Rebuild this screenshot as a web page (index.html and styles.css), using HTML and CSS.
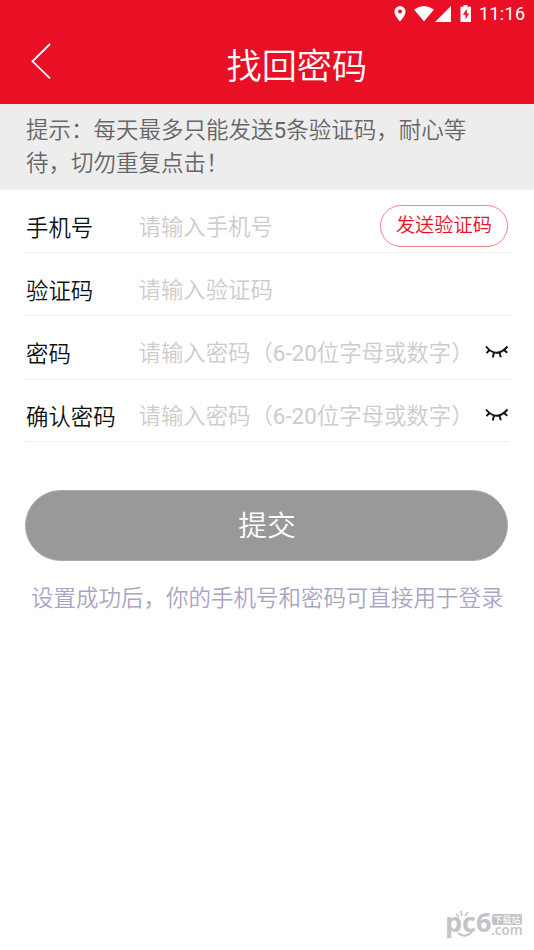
FILE: index.html
```html
<!DOCTYPE html>
<html lang="zh-CN">
<head>
<meta charset="utf-8">
<title>找回密码</title>
<link rel="stylesheet" href="styles.css">
</head>
<body>
<header class="top">
  <div class="status">
    <svg class="pin" width="12" height="16" viewBox="0 0 12 16"><path fill="#fff" fill-rule="evenodd" d="M6 0a5.6 5.6 0 0 0-5.6 5.6C.4 9.8 6 15.600 6 15.600s5.600-5.800 5.600-10A5.600 5.600 0 0 0 6 0zm0 3.600a2 2 0 1 1 0 4 2 2 0 0 1 0-4z"/></svg>
    <svg class="wifi" width="20" height="16" viewBox="0 0 20 16"><path fill="#fff" d="M0 3.500Q10-3.500 20 3.500L10 15.500z"/></svg>
    <svg class="signal" width="16" height="16" viewBox="0 0 16 16"><path fill="#fff" d="M16 0v16H0z"/></svg>
    <svg class="battery" width="12" height="17" viewBox="0 0 12 17"><path fill="#fff" fill-rule="evenodd" d="M3.500 0h4v1.700H11V17H.5V1.700h3zM6.800 4L2.800 9.800h2.700v4.500l3.700-5.800H6.800z"/></svg>
    <span class="clock">11:16</span>
  </div>
  <div class="nav">
    <svg class="back" width="20" height="36" viewBox="0 0 20 36"><path d="M19 1L1.500 18.300 19 35.300" fill="none" stroke="#fff" stroke-width="1.800"/></svg>
    <h1 class="title">找回密码</h1>
  </div>
</header>
<p class="tip">提示：每天最多只能发送<span class="num">5</span>条验证码，耐心等<br>待，切勿重复点击！</p>
<main class="form">
  <div class="row row-phone"><label class="label">手机号</label><span class="field">请输入手机号</span><button class="send">发送验证码</button></div>
  <div class="row row-code"><label class="label">验证码</label><span class="field">请输入验证码</span></div>
  <div class="row row-pass"><label class="label">密码</label><span class="field">请输入密码（<span class="num">6-20</span>位字母或数字）</span>
    <svg class="eye" width="24" height="14" viewBox="0 0 24 14"><path d="M1 1.500Q11.500 14 22.500 1.500M4.500 5L1.500 8.200M9 7.500L7.800 12.500M14.500 7.500L15.800 12.200M19 5L22.300 7.700" fill="none" stroke="#111" stroke-width="1.900"/></svg></div>
  <div class="row row-confirm"><label class="label">确认密码</label><span class="field">请输入密码（<span class="num">6-20</span>位字母或数字）</span>
    <svg class="eye" width="24" height="14" viewBox="0 0 24 14"><path d="M1 1.500Q11.500 14 22.500 1.500M4.500 5L1.500 8.200M9 7.500L7.800 12.500M14.500 7.500L15.800 12.200M19 5L22.300 7.700" fill="none" stroke="#111" stroke-width="1.900"/></svg></div>
  <button class="submit">提交</button>
  <p class="note">设置成功后，你的手机号和密码可直接用于登录</p>
</main>
<footer class="mark">
  <span class="mark-name">pc6</span>
  <span class="mark-side"><span class="mark-tag">下载站</span><span class="mark-com">.com</span></span>
  <svg class="mark-rays" width="14" height="7" viewBox="0 0 14 7"><path d="M1 3l3 3M6 0l1 5M13 1l-3 4" stroke="#c3c4c8" stroke-width="1.600"/></svg>
  <svg class="mark-smile" width="16" height="5" viewBox="0 0 16 5"><path d="M1 1Q8 7 15 0" fill="none" stroke="#c3c4c8" stroke-width="2"/></svg>
</footer>
</body>
</html>
```

FILE: styles.css
```css
* { box-sizing: border-box; }
body {
  margin: 0;
  height: 950px;
  display: flex;
  flex-direction: column;
  background: #fff;
  overflow: hidden;
  font-family: Roboto, "Noto Sans CJK SC DemiLight", "Noto Sans CJK SC", sans-serif;
  font-size: 22.400px;
  font-weight: 350;
}
button { font-family: inherit; font-weight: inherit; padding: 0; }
.num { font-weight: 400; }
.top { height: 103.500px; background: #e91026; color: #fff; flex: none; }
.status { height: 27px; display: flex; justify-content: flex-end; align-items: center; padding-right: 9px; }
.wifi { margin-left: 8px; }
.signal { margin-left: 1px; }
.battery { margin-left: 9px; }
.clock { margin-left: 7px; width: 46px; font-size: 18px; font-weight: 400; line-height: 27px; letter-spacing: .3px; white-space: nowrap; }
.nav { height: 76px; display: flex; align-items: center; padding-left: 31px; }
.back { flex: none; margin-bottom: 8px; }
.title { margin: 0 0 0 175.500px; padding-top: 3px; font-size: 35.200px; font-weight: 350; line-height: 76px; }
.tip { margin: 0; flex: none; height: 86.500px; padding: 10.500px 26px 0; background: #ededed; color: #666; font-size: 22.500px; line-height: 33px; white-space: nowrap; }
.form { flex: 1; padding: 0 25.500px 0 25px; display: flex; flex-direction: column; }
.row { height: 63px; display: flex; align-items: center; border-bottom: 1px solid #eee; flex: none; padding: 14px 0 0 1px; }
.row-pass { height: 63.500px; }
.row-confirm { height: 62.500px; }
.label { width: 112.500px; color: #111; line-height: 34px; }
.field { color: #ccc; flex: 1; line-height: 34px; padding-bottom: 2px; white-space: nowrap; }
.send { width: 128px; height: 42px; margin: 0 .6px 5px 0; border: 1px solid #f48490; border-radius: 21px; background: #fff; color: #ea1026; font-size: 19.200px; line-height: 38px; }
.eye { flex: none; margin-bottom: 5px; }
.submit { flex: none; height: 71px; margin: 48px .6px 0 0; padding: 0 0 4px 1px; border: 1px solid #aaa; border-radius: 36px; background: #999; color: #fff; font-size: 28.800px; }
.note { margin: 19.500px 0 0; padding-left: 1px; font-size: 22.500px; line-height: 34px; color: #aca4c4; text-align: center; white-space: nowrap; }
.mark { flex: none; position: relative; height: 40px; display: flex; justify-content: flex-end; padding-right: 12px; color: #c3c4c8; font-family: "Open Sans", sans-serif; }
.mark-name { width: 46px; font-size: 27px; font-weight: 700; line-height: 24px; white-space: nowrap; }
.mark-side { display: flex; flex-direction: column; width: 31px; }
.mark-tag { height: 11px; margin: 4px 0 0 1px; background: #c3c4c8; border-radius: 2px; color: #fff; font: 9px/11px "Noto Sans CJK SC", sans-serif; text-align: center; }
.mark-com { font-size: 13.500px; line-height: 11px; font-weight: 600; }
.mark-rays { position: absolute; left: 455px; top: 1px; }
.mark-smile { position: absolute; left: 457px; top: 22px; }
```
